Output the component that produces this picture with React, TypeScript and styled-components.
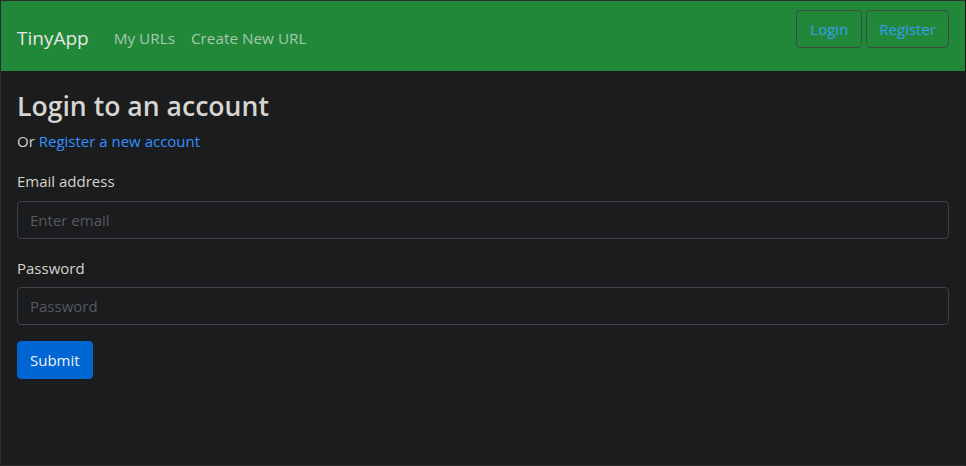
import React from "react";
import styled, { createGlobalStyle } from "styled-components";

const Global = createGlobalStyle`
  html, body { margin: 0; padding: 0; background: #1b1c1e; }
  body { font-family: "Open Sans", "Noto Sans", sans-serif; color: #d6d2cc; }
  * { box-sizing: border-box; }
`;

const Frame = styled.div`
  width: 966px;
  height: 466px;
  border: 1px solid #2a2b2d;
  border-right-color: #1b1c1e;
  background: #1b1c1e;
  overflow: hidden;
`;

const NavBar = styled.nav`
  height: 70px;
  background: #21883a;
  display: flex;
  align-items: flex-start;
  justify-content: space-between;
  padding: 0 16px;
`;

const NavLeft = styled.div`
  display: flex;
  align-items: center;
  height: 100%;
  padding-top: 3px;
`;

const Brand = styled.span`
  font-size: 19px;
  color: #e8e6e3;
  margin-right: 17px;
`;

const NavLink = styled.span`
  font-size: 15.3px;
  color: #a7c9ae;
  padding: 0 8px;
`;

const NavRight = styled.div`
  display: flex;
  gap: 4px;
  padding-top: 9px;
`;

const OutlineButton = styled.button<{ $pad?: number }>`
  height: 38px;
  padding: 0 ${(p) => p.$pad ?? 12}px;
  border: 1px solid #3e4a42;
  border-radius: 4px;
  background: transparent;
  color: #3a9df0;
  font-family: inherit;
  font-size: 15px;
`;

const Main = styled.main`
  padding: 20px 16px;
`;

const Title = styled.h3`
  margin: 0 0 7px;
  font-size: 26.6px;
  font-weight: 600;
  line-height: 1.2;
  color: #d8d4cf;
`;

const Sub = styled.p`
  margin: 0 0 18px;
  font-size: 15px;
  line-height: 1.5;
`;

const Link = styled.a`
  color: #3391ff;
  text-decoration: none;
`;

const Group = styled.div`
  margin-bottom: 18px;
  &:last-of-type { margin-bottom: 16px; }
`;

const Label = styled.label`
  display: block;
  font-size: 15px;
  line-height: 1.5;
  margin-bottom: 8px;
`;

const Input = styled.input`
  display: block;
  width: 100%;
  height: 38px;
  padding: 6px 12px;
  background: #1b1c1e;
  border: 1px solid #3d4044;
  border-radius: 4px;
  font-family: inherit;
  font-size: 15px;
  color: #d6d2cc;
  &::placeholder { color: #55595e; }
  outline: none;
`;

const Submit = styled.button`
  height: 38px;
  padding: 0 12px;
  background: #0066d4;
  border: 1px solid #0066d4;
  border-radius: 4px;
  color: #f0f0f0;
  font-family: inherit;
  font-size: 15px;
`;

export default function App() {
  return (
    <>
      <Global />
      <Frame>
        <NavBar>
          <NavLeft>
            <Brand>TinyApp</Brand>
            <NavLink>My URLs</NavLink>
            <NavLink>Create New URL</NavLink>
          </NavLeft>
          <NavRight>
            <OutlineButton $pad={13}>Login</OutlineButton>
            <OutlineButton>Register</OutlineButton>
          </NavRight>
        </NavBar>
        <Main>
          <Title>Login to an account</Title>
          <Sub>
            Or <Link href="#">Register a new account</Link>
          </Sub>
          <Group>
            <Label>Email address</Label>
            <Input type="email" placeholder="Enter email" />
          </Group>
          <Group>
            <Label>Password</Label>
            <Input type="password" placeholder="Password" />
          </Group>
          <Submit>Submit</Submit>
        </Main>
      </Frame>
    </>
  );
}
